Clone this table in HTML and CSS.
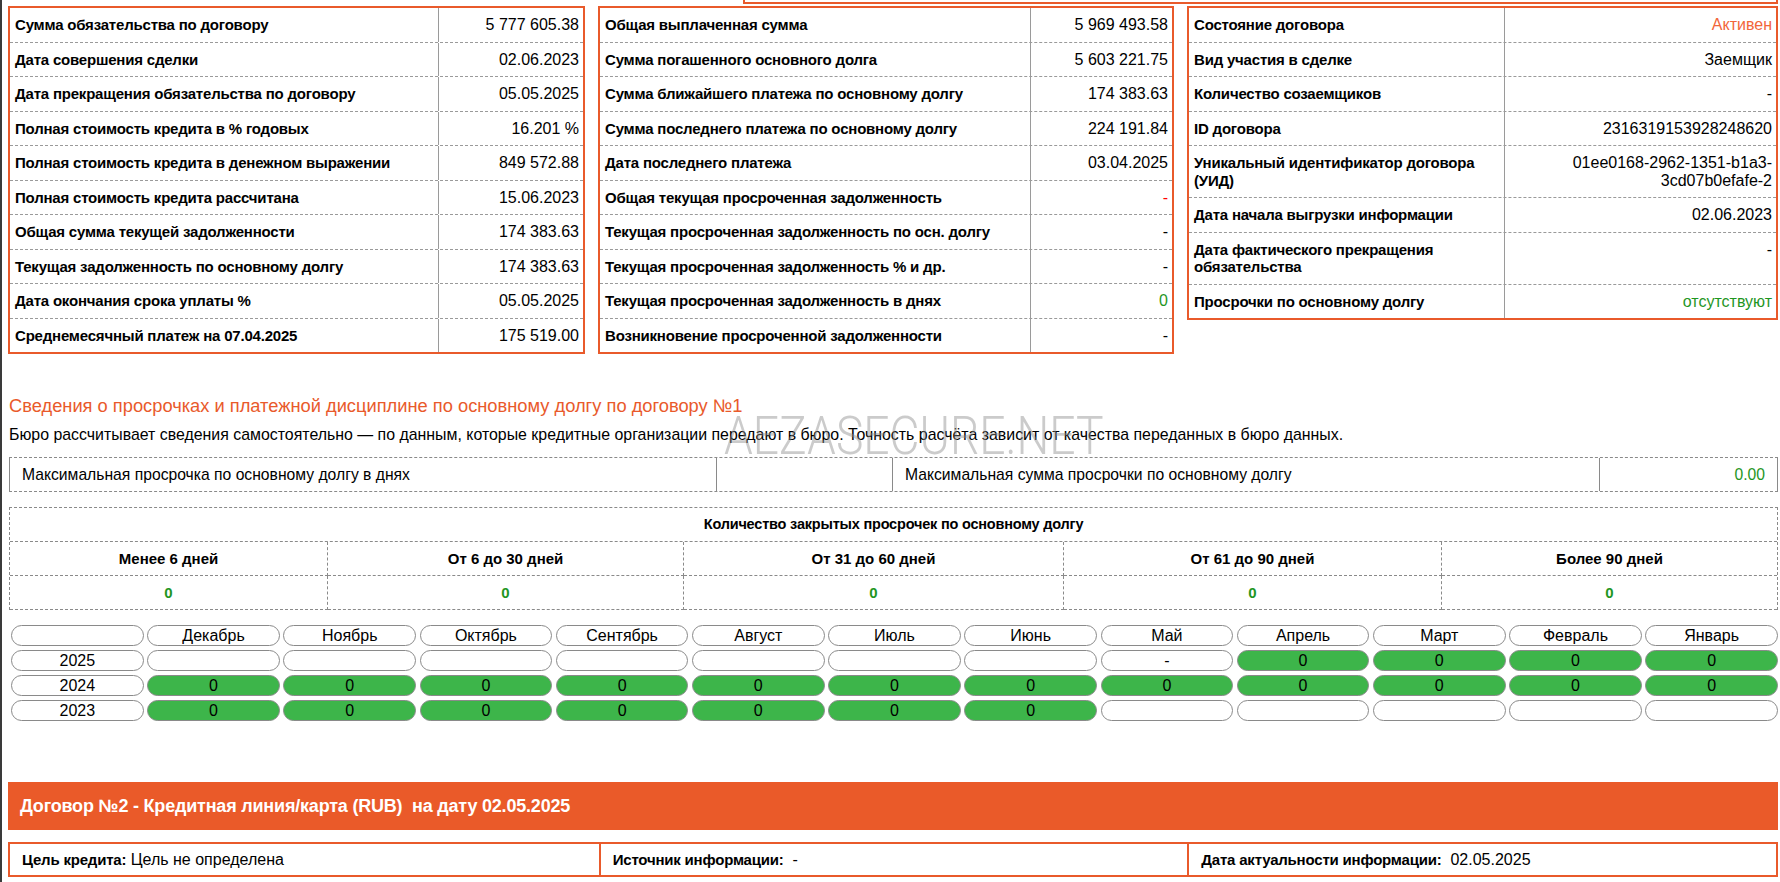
FILE: index.html
```html
<!DOCTYPE html>
<html lang="ru">
<head>
<meta charset="utf-8">
<title>Кредитная история</title>
<link rel="stylesheet" href="styles.css">
</head>
<body>
<div class="page">
  <div class="prev-box"></div>

  <div class="summary">
    <div class="kv kv-1">
      <div class="kv-row"><div class="kv-label">Сумма обязательства по договору</div><div class="kv-value">5 777 605.38</div></div>
      <div class="kv-row"><div class="kv-label">Дата совершения сделки</div><div class="kv-value">02.06.2023</div></div>
      <div class="kv-row"><div class="kv-label">Дата прекращения обязательства по договору</div><div class="kv-value">05.05.2025</div></div>
      <div class="kv-row"><div class="kv-label">Полная стоимость кредита в % годовых</div><div class="kv-value">16.201 %</div></div>
      <div class="kv-row"><div class="kv-label">Полная стоимость кредита в денежном выражении</div><div class="kv-value">849 572.88</div></div>
      <div class="kv-row"><div class="kv-label">Полная стоимость кредита рассчитана</div><div class="kv-value">15.06.2023</div></div>
      <div class="kv-row"><div class="kv-label">Общая сумма текущей задолженности</div><div class="kv-value">174 383.63</div></div>
      <div class="kv-row"><div class="kv-label">Текущая задолженность по основному долгу</div><div class="kv-value">174 383.63</div></div>
      <div class="kv-row"><div class="kv-label">Дата окончания срока уплаты %</div><div class="kv-value">05.05.2025</div></div>
      <div class="kv-row"><div class="kv-label">Среднемесячный платеж на 07.04.2025</div><div class="kv-value">175 519.00</div></div>
    </div>

    <div class="kv kv-2">
      <div class="kv-row"><div class="kv-label">Общая выплаченная сумма</div><div class="kv-value">5 969 493.58</div></div>
      <div class="kv-row"><div class="kv-label">Сумма погашенного основного долга</div><div class="kv-value">5 603 221.75</div></div>
      <div class="kv-row"><div class="kv-label">Сумма ближайшего платежа по основному долгу</div><div class="kv-value">174 383.63</div></div>
      <div class="kv-row"><div class="kv-label">Сумма последнего платежа по основному долгу</div><div class="kv-value">224 191.84</div></div>
      <div class="kv-row"><div class="kv-label">Дата последнего платежа</div><div class="kv-value">03.04.2025</div></div>
      <div class="kv-row"><div class="kv-label">Общая текущая просроченная задолженность</div><div class="kv-value red">-</div></div>
      <div class="kv-row"><div class="kv-label">Текущая просроченная задолженность по осн. долгу</div><div class="kv-value">-</div></div>
      <div class="kv-row"><div class="kv-label">Текущая просроченная задолженность % и др.</div><div class="kv-value">-</div></div>
      <div class="kv-row"><div class="kv-label">Текущая просроченная задолженность в днях</div><div class="kv-value green">0</div></div>
      <div class="kv-row"><div class="kv-label">Возникновение просроченной задолженности</div><div class="kv-value">-</div></div>
    </div>

    <div class="kv kv-3">
      <div class="kv-row"><div class="kv-label">Состояние договора</div><div class="kv-value orange">Активен</div></div>
      <div class="kv-row"><div class="kv-label">Вид участия в сделке</div><div class="kv-value">Заемщик</div></div>
      <div class="kv-row"><div class="kv-label">Количество созаемщиков</div><div class="kv-value">-</div></div>
      <div class="kv-row"><div class="kv-label">ID договора</div><div class="kv-value">2316319153928248620</div></div>
      <div class="kv-row"><div class="kv-label">Уникальный идентификатор договора (УИД)</div><div class="kv-value">01ee0168-2962-1351-b1a3-<br>3cd07b0efafe-2</div></div>
      <div class="kv-row"><div class="kv-label">Дата начала выгрузки информации</div><div class="kv-value">02.06.2023</div></div>
      <div class="kv-row"><div class="kv-label">Дата фактического прекращения<br>обязательства</div><div class="kv-value">-</div></div>
      <div class="kv-row"><div class="kv-label">Просрочки по основному долгу</div><div class="kv-value green">отсутствуют</div></div>
    </div>
  </div>

  <h2 class="section-title">Сведения о просрочках и платежной дисциплине по основному долгу по договору №1</h2>
  <p class="note">Бюро рассчитывает сведения самостоятельно — по данным, которые кредитные организации передают в бюро. Точность расчёта зависит от качества переданных в бюро данных.</p>

  <div class="max-row">
    <div class="max-cell">Максимальная просрочка по основному долгу в днях</div>
    <div class="max-cell"></div>
    <div class="max-cell">Максимальная сумма просрочки по основному долгу</div>
    <div class="max-cell num green">0.00</div>
  </div>

  <div class="closed">
    <div class="closed-title">Количество закрытых просрочек по основному долгу</div>
    <div class="closed-grid">
      <div class="closed-head">Менее 6 дней</div>
      <div class="closed-head">От 6 до 30 дней</div>
      <div class="closed-head">От 31 до 60 дней</div>
      <div class="closed-head">От 61 до 90 дней</div>
      <div class="closed-head">Более 90 дней</div>
      <div class="closed-val">0</div>
      <div class="closed-val">0</div>
      <div class="closed-val">0</div>
      <div class="closed-val">0</div>
      <div class="closed-val">0</div>
    </div>
  </div>

  <div class="months">
    <div class="pill"></div>
    <div class="pill">Декабрь</div>
    <div class="pill">Ноябрь</div>
    <div class="pill">Октябрь</div>
    <div class="pill">Сентябрь</div>
    <div class="pill">Август</div>
    <div class="pill">Июль</div>
    <div class="pill">Июнь</div>
    <div class="pill">Май</div>
    <div class="pill">Апрель</div>
    <div class="pill">Март</div>
    <div class="pill">Февраль</div>
    <div class="pill">Январь</div>

    <div class="pill">2025</div>
    <div class="pill"></div>
    <div class="pill"></div>
    <div class="pill"></div>
    <div class="pill"></div>
    <div class="pill"></div>
    <div class="pill"></div>
    <div class="pill"></div>
    <div class="pill">-</div>
    <div class="pill ok">0</div>
    <div class="pill ok">0</div>
    <div class="pill ok">0</div>
    <div class="pill ok">0</div>

    <div class="pill">2024</div>
    <div class="pill ok">0</div>
    <div class="pill ok">0</div>
    <div class="pill ok">0</div>
    <div class="pill ok">0</div>
    <div class="pill ok">0</div>
    <div class="pill ok">0</div>
    <div class="pill ok">0</div>
    <div class="pill ok">0</div>
    <div class="pill ok">0</div>
    <div class="pill ok">0</div>
    <div class="pill ok">0</div>
    <div class="pill ok">0</div>

    <div class="pill">2023</div>
    <div class="pill ok">0</div>
    <div class="pill ok">0</div>
    <div class="pill ok">0</div>
    <div class="pill ok">0</div>
    <div class="pill ok">0</div>
    <div class="pill ok">0</div>
    <div class="pill ok">0</div>
    <div class="pill"></div>
    <div class="pill"></div>
    <div class="pill"></div>
    <div class="pill"></div>
    <div class="pill"></div>
  </div>

  <div class="contract-band">Договор №2 - Кредитная линия/карта (RUB)&nbsp; на дату 02.05.2025</div>

  <div class="info-row">
    <div class="info-cell"><b>Цель кредита:</b> Цель не определена</div>
    <div class="info-cell"><b>Источник информации:</b>&nbsp; -</div>
    <div class="info-cell"><b>Дата актуальности информации:</b>&nbsp; 02.05.2025</div>
  </div>

  <div class="watermark">AEZASECURE.NET</div>
</div>
</body>
</html>
```
FILE: styles.css
```css
* { box-sizing: border-box; }

html, body {
  margin: 0;
  padding: 0;
  background: #fff;
}

body {
  font-family: "Liberation Sans", Arial, sans-serif;
  font-size: 16px;
  color: #000;
  overflow: hidden;
}

.page {
  position: relative;
  border-left: 2px solid #3a3a3a;
  padding: 0 2px 0 6px;
  min-height: 882px;
}

.prev-box {
  margin-left: 735px;
  height: 4px;
  border: 2px solid #e95a2b;
  border-top: none;
}

.summary {
  display: flex;
  gap: 13px;
  align-items: flex-start;
  margin-top: 2px;
}

.kv {
  border: 2px solid #e95a2b;
}
.kv-1 { width: 577px; }
.kv-2 { width: 576px; }
.kv-3 { width: 591px; }

.kv-row {
  display: grid;
  border-bottom: 1px dashed #9a9a9a;
}
.kv-row:last-child { border-bottom: none; }
.kv-1 .kv-row { grid-template-columns: 1fr 145px; }
.kv-2 .kv-row { grid-template-columns: 1fr 142px; }
.kv-3 .kv-row { grid-template-columns: 1fr 272px; }

.kv-label,
.kv-value {
  padding: 8px 4px 8px 5px;
  line-height: 17.5px;
}
.kv-label {
  font-size: 15px;
  font-weight: bold;
  letter-spacing: -0.2px;
}
.kv-value {
  text-align: right;
  border-left: 1px solid #9a9a9a;
}

.red { color: #ff0000; }
.green { color: #1f961f; }
.orange { color: #f2663a; }

.section-title {
  margin: 41px 0 0 1px;
  font-size: 18.3px;
  font-weight: normal;
  color: #e95a2b;
  line-height: 22px;
}

.note {
  margin: 9px 0 0 1px;
  font-size: 15.9px;
  line-height: 18px;
}

.max-row {
  display: grid;
  grid-template-columns: 708px 176px 1fr 178px;
  margin-top: 13px;
  margin-left: 1px;
  border-top: 1px dashed #8a8a8a;
  border-bottom: 1px dashed #8a8a8a;
}
.max-cell {
  padding: 8px 12px;
  font-size: 15.7px;
  line-height: 17px;
  border-right: 1px solid #8a8a8a;
}
.max-cell:first-child { border-left: 1px solid #8a8a8a; }
.max-cell.num { text-align: right; }

.closed {
  margin-top: 15px;
  margin-left: 1px;
  border: 1px dashed #8a8a8a;
  border-bottom: none;
}
.closed-title {
  text-align: center;
  font-size: 14.5px;
  font-weight: bold;
  padding: 8px 0;
  line-height: 17px;
  border-bottom: 1px dashed #8a8a8a;
  letter-spacing: -0.2px;
}
.closed-grid {
  display: grid;
  grid-template-columns: 318px 356px 380px 378px 1fr;
}
.closed-head,
.closed-val {
  text-align: center;
  font-size: 15px;
  font-weight: bold;
  padding: 8px 0;
  line-height: 17px;
  border-bottom: 1px dashed #8a8a8a;
  border-right: 1px dashed #8a8a8a;
}
.closed-head:nth-child(5),
.closed-val:nth-child(10) { border-right: none; }
.closed-val { color: #1f961f; }

.months {
  display: grid;
  grid-template-columns: repeat(13, 1fr);
  column-gap: 3.5px;
  row-gap: 4px;
  margin: 15px 0 0 3px;
}
.pill {
  height: 21px;
  border: 1px solid #8a8a8a;
  border-radius: 11px;
  background: #fff;
  text-align: center;
  line-height: 19px;
  font-size: 16px;
}
.pill.ok {
  background: #3db54a;
}

.contract-band {
  margin-top: 61px;
  height: 48px;
  background: #ea5a29;
  color: #fff;
  font-size: 18px;
  font-weight: bold;
  line-height: 48px;
  padding-left: 12px;
  letter-spacing: -0.2px;
}

.info-row {
  display: grid;
  grid-template-columns: 1fr 1fr 1fr;
  margin-top: 12px;
  border: 2px solid #e95a2b;
}
.info-cell {
  padding: 7px 12px;
  line-height: 17px;
}
.info-cell + .info-cell { border-left: 2px solid #e95a2b; }
.info-cell b { font-size: 15px; letter-spacing: -0.2px; }

.watermark {
  position: absolute;
  left: 722px;
  top: 404px;
  font-family: Roboto, "Liberation Sans", sans-serif;
  font-weight: 300;
  font-size: 54px;
  line-height: 64px;
  color: rgba(140, 140, 140, 0.45);
  transform: scaleX(0.855);
  transform-origin: left top;
  pointer-events: none;
  white-space: nowrap;
}
```
